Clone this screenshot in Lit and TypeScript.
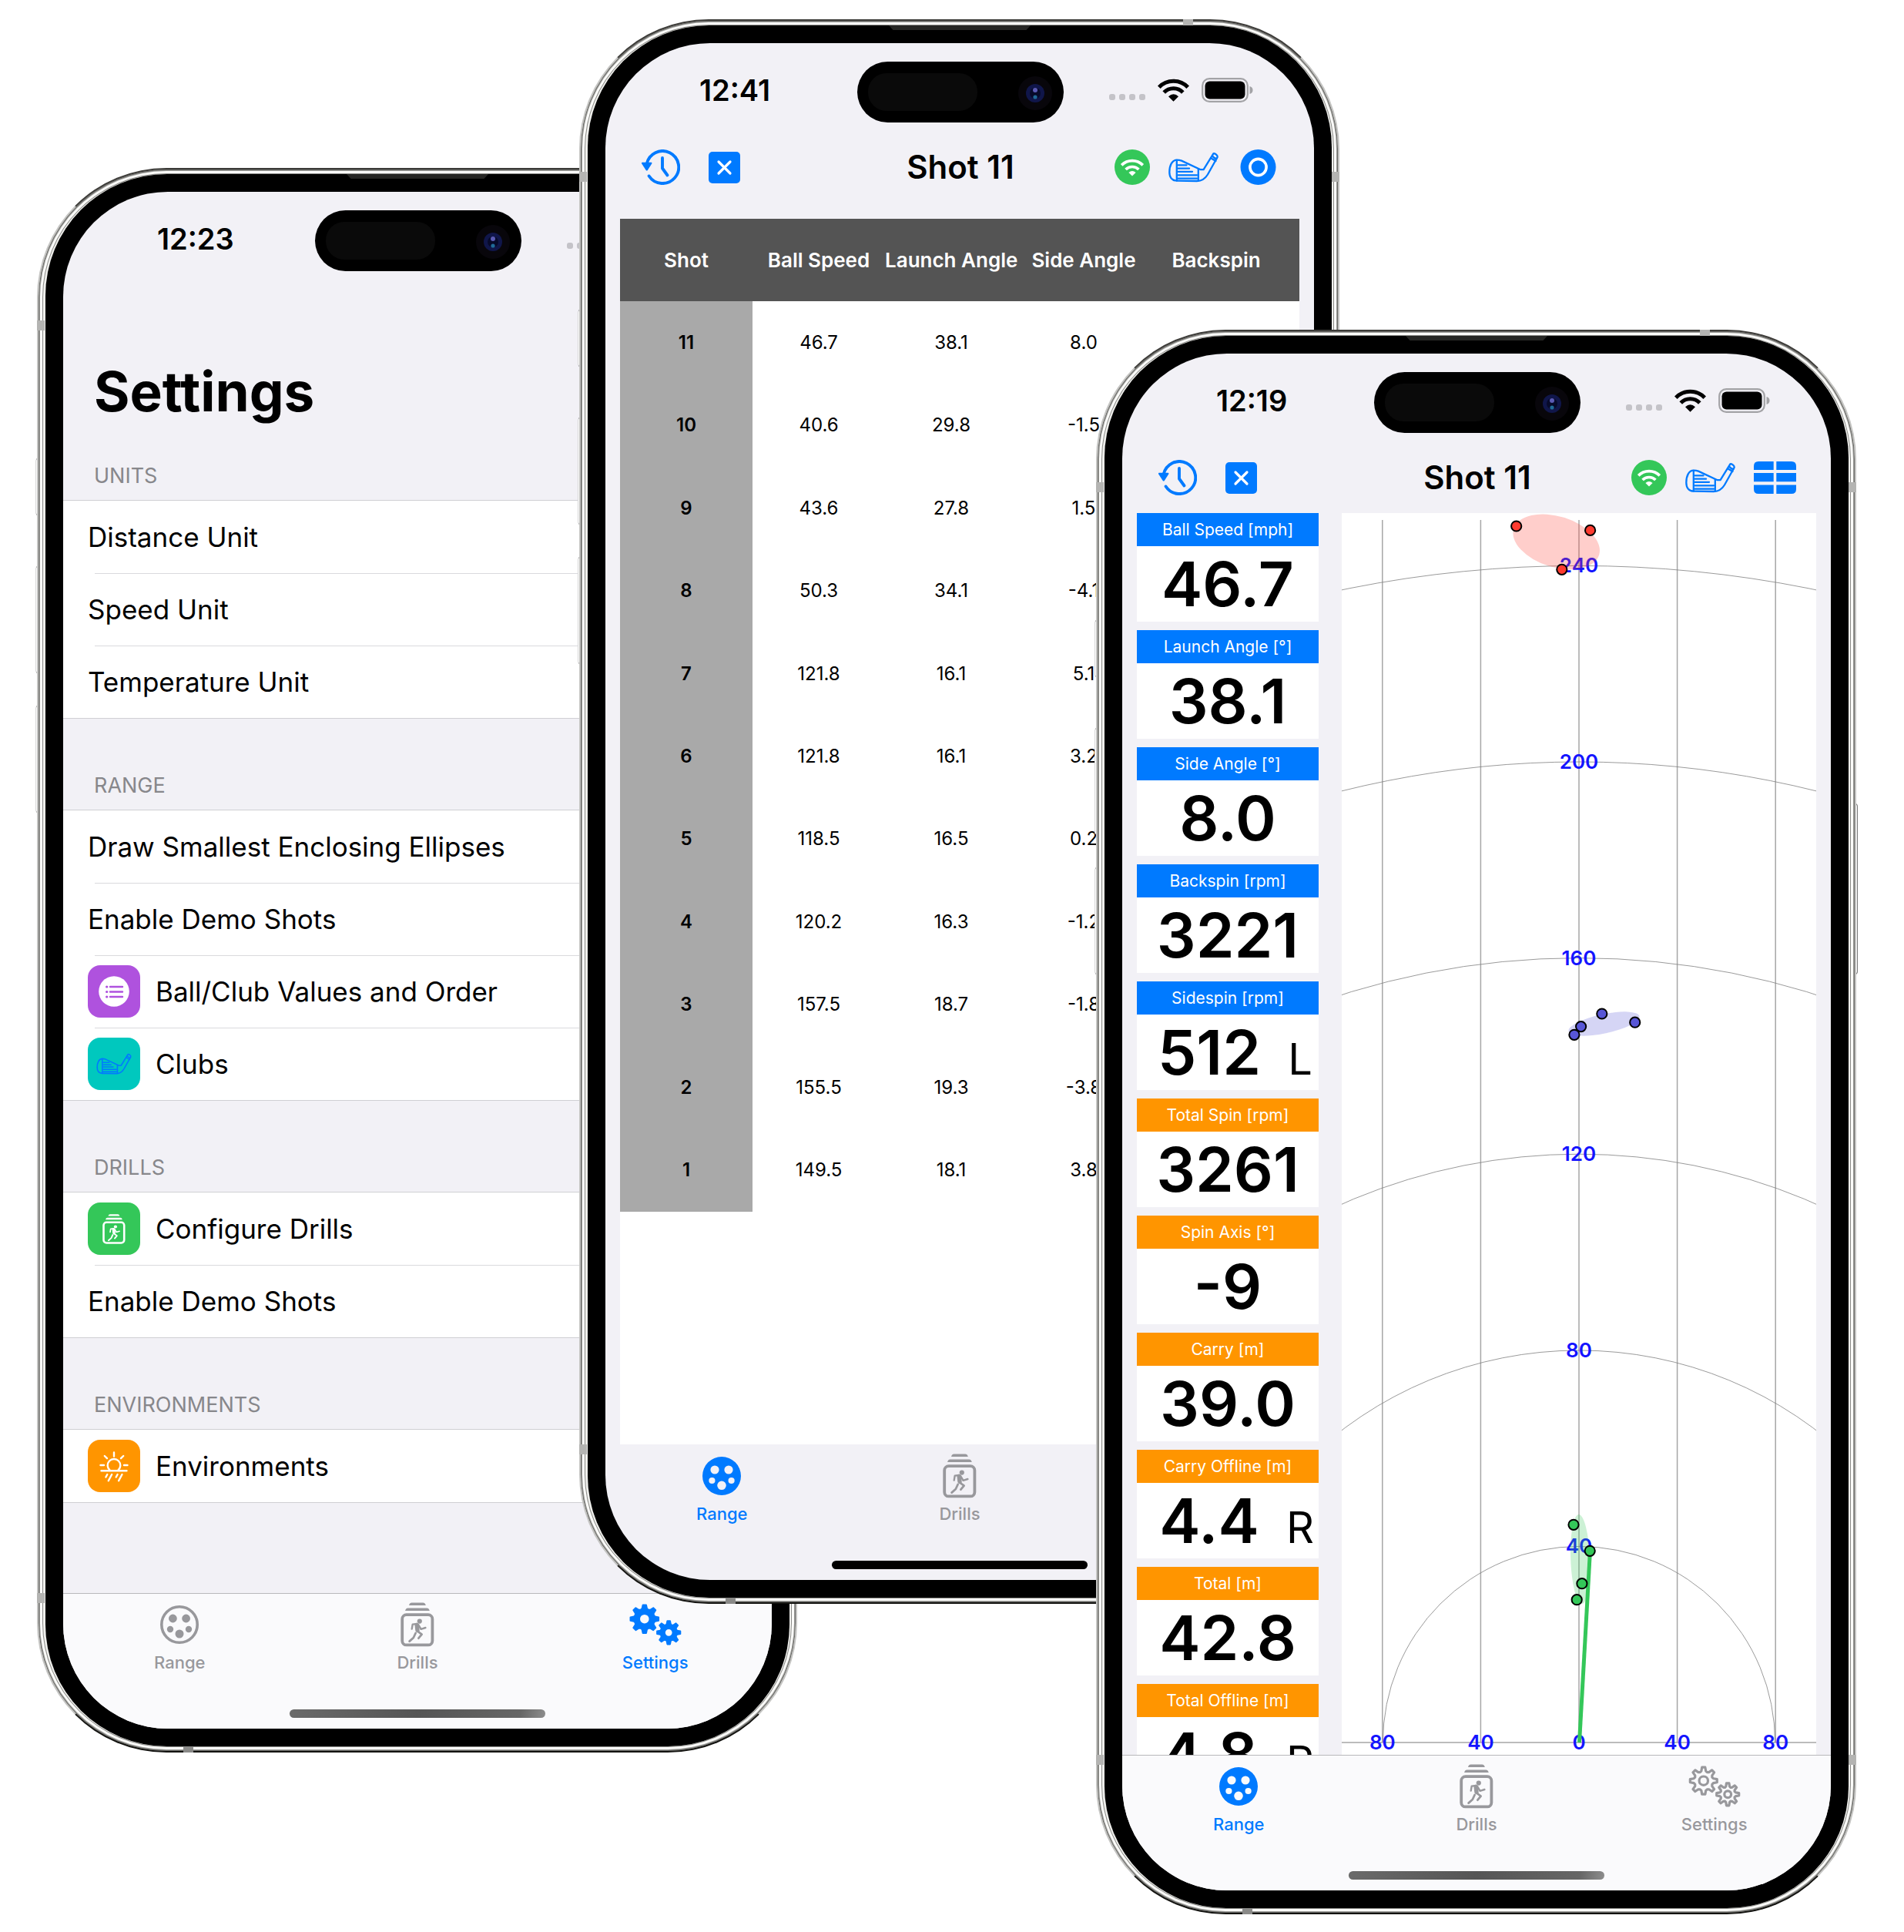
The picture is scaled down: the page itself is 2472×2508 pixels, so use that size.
import { LitElement, html, svg, css, nothing, type TemplateResult } from "lit";
import { customElement, property } from "lit/decorators.js";
import { classMap } from "lit/directives/class-map.js";

/* ---------- icons ---------- */

const gearPath = (cx: number, cy: number, outer: number, root: number): string => {
  const teeth = 8;
  const step = (Math.PI * 2) / teeth;
  const at = (r: number, a: number) =>
    `${(cx + r * Math.sin(a)).toFixed(2)} ${(cy - r * Math.cos(a)).toFixed(2)}`;
  let d = "";
  for (let i = 0; i < teeth; i++) {
    const a = i * step;
    d += `${i ? "L" : "M"}${at(root, a - step * 0.29)}L${at(outer, a - step * 0.15)}`;
    d += `L${at(outer, a + step * 0.15)}L${at(root, a + step * 0.29)}`;
    d += `L${at(root - 1, a + step * 0.5)}`;
  }
  return d + "Z";
};

const hole = (cx: number, cy: number, r: number): string =>
  `M${cx - r} ${cy}a${r} ${r} 0 1 0 ${r * 2} 0a${r} ${r} 0 1 0 ${-r * 2} 0Z`;

const rangeIcon = (filled: boolean) => html`<svg class="glyph" viewBox="0 0 50 60" width="50" height="60" aria-hidden="true">
  ${filled
    ? svg`<path fill="currentColor" fill-rule="evenodd" d="${hole(25, 30, 25)}${hole(16, 22, 5.6)}${hole(34, 22, 5.6)}${hole(12.4, 36, 4.1)}${hole(37.6, 36, 4.1)}${hole(25, 42.3, 5.8)}"/>`
    : svg`<circle cx="25" cy="30" r="23.2" fill="none" stroke="currentColor" stroke-width="3.6"/>
        <path fill="currentColor" d="${hole(16.4, 22, 5.4)}${hole(33.6, 22, 5.4)}${hole(13, 36, 4.2)}${hole(37, 36, 4.2)}${hole(25, 42, 5.5)}"/>`}
</svg>`;

const drillsIcon = (w = 44, h = 60) => html`<svg class="glyph" viewBox="0 0 44 60" width=${w} height=${h} aria-hidden="true">
  <g fill="none" stroke="currentColor" stroke-linecap="round" stroke-linejoin="round">
    <rect x="2.2" y="17.2" width="39.2" height="39.2" rx="5.5" stroke-width="3.8"/>
    <path d="M21.2 30.5l.8 7" stroke-width="5.400"/>
    <path d="M21.5 29l-5.8.6-1 6M23 30l3.6 5.8 5.8-1.8" stroke-width="2.4"/>
    <path d="M22 38.5l5.6 4.2-4.2 5M19.6 41l-2.8 6-5.2 4.6" stroke-width="2.8"/>
  </g>
  <g fill="currentColor">
    <circle cx="24.8" cy="25.6" r="3.1"/>
    <path d="M11 5c.8-2.4 1.8-3.4 3.6-3.4h14.6c1.800 0 2.800 1 3.600 3.400z"/>
    <path d="M6 12c.8-2.600 1.800-3.600 3.600-3.600h24.600c1.800 0 2.800 1 3.600 3.600z"/>
  </g>
</svg>`;

const gearsIcon = (filled: boolean) => html`<svg class="glyph" viewBox="0 0 68 60" width="68" height="60" aria-hidden="true">
  ${filled
    ? svg`<path fill="currentColor" fill-rule="evenodd" stroke="currentColor" stroke-width="2" stroke-linejoin="round"
        d="${gearPath(19.8, 22.7, 18.4, 14)}${hole(19.8, 22.7, 6.8)}${gearPath(51.2, 40.3, 15.2, 11.4)}${hole(51.2, 40.3, 5.4)}"/>`
    : svg`<g fill="none" stroke="currentColor" stroke-width="3.2" stroke-linejoin="round">
        <path d="${gearPath(19.8, 22.7, 17.6, 13)}"/><circle cx="19.800" cy="22.700" r="5.7"/>
        <path d="${gearPath(51.2, 40.3, 14.6, 10.6)}"/><circle cx="51.200" cy="40.300" r="4.400"/></g>`}
</svg>`;

const clubIcon = (w = 65, h = 40) => html`<svg class="glyph" viewBox="0 0 65 40" width=${w} height=${h} aria-hidden="true">
  <g fill="none" stroke="currentColor" stroke-width="2.300" stroke-linejoin="round" stroke-linecap="round">
    <path d="M11 10.600C4.500 10.600 1.300 18 1.300 26.500 1.300 33.500 5 37.500 11 37.700L37 38C44.500 38 48 34.500 51 29.500L63.600 7C64.200 4.800 60.500 1.600 58.400 2.400L45.600 23.200H41.800L17 11.600C15 10.800 13 10.600 11 10.600Z"/>
    <path d="M10.800 10.800V37.600M38.800 22.500V37.800M55.400 8.400L61.500 12M57 5.500Q60 9 62.500 9"/>
    <path d="M12.500 17.400H23.500M12.500 21.700H27M12.500 25.800H31M12.500 30.300H37M12.500 34.700H37"/>
  </g>
</svg>`;

const historyIcon = html`<svg class="glyph" viewBox="0 0 50 46" width="50" height="46" aria-hidden="true">
  <g fill="none" stroke="currentColor" stroke-width="3.9" stroke-linecap="round" stroke-linejoin="round">
    <path d="M6.600 19A21 21 0 1 1 9.600 34.500"/>
    <path d="M27 11V24.500L33.500 33.500"/>
  </g>
  <path fill="currentColor" d="M.8 16.800H12.700Q13.800 17.200 13.200 18.500L7.800 27Q6.700 28 5.700 27L.2 18.500Q-.4 17.200.8 16.800Z"/>
</svg>`;

const closeIcon = html`<svg class="glyph" viewBox="0 0 41 41" width="41" height="41" aria-hidden="true">
  <rect width="41" height="41" rx="5" fill="currentColor"/>
  <path d="M13 13L28 28M28 13L13 28" stroke="#fff" stroke-width="3.200" stroke-linecap="round"/>
</svg>`;

const linkIcon = html`<svg class="glyph" viewBox="0 0 46 46" width="46" height="46" aria-hidden="true">
  <circle cx="23" cy="23" r="23" fill="currentColor"/>
  <g fill="none" stroke="#fff" stroke-width="3.700">
    <path d="M9.200 20.400A19.500 19.500 0 0 1 36.800 20.400"/>
    <path d="M14.600 26A11.800 11.800 0 0 1 31.400 26"/>
  </g>
  <path fill="#fff" d="M18.400 30Q23 26 27.600 30L23 34.600Z"/>
</svg>`;

const ringIcon = html`<svg class="glyph" viewBox="0 0 55 46" width="55" height="46" aria-hidden="true">
  <circle cx="27.500" cy="23" r="23" fill="currentColor"/>
  <circle cx="27.500" cy="23" r="10.600" fill="none" stroke="#fff" stroke-width="3.600"/>
</svg>`;

const gridIcon = html`<svg class="glyph" viewBox="0 0 55 42" width="55" height="42" aria-hidden="true">
  <path fill="currentColor" d="M6 0H25.700V11H0V6Q0 0 6 0ZM29.300 0H49Q55 0 55 6V11H29.300ZM0 15H25.700V26.300H0ZM29.300 15H55V26.300H29.300ZM0 30.500H25.700V42H6Q0 42 0 36ZM29.300 30.500H55V36Q55 42 49 42H29.300Z"/>
</svg>`;

const listIcon = html`<svg class="glyph" viewBox="0 0 68 68" width="68" height="68" aria-hidden="true">
  <circle cx="34" cy="34" r="19.800" fill="#fff"/>
  <g stroke="#af52de" stroke-width="2.400" stroke-linecap="round">
    <path d="M29 28H45M29 34.500H45M29 41H45"/>
    <path d="M24.600 28h.2M24.600 34.500h.2M24.600 41h.2" stroke-width="3.200"/>
  </g>
</svg>`;

const sunIcon = html`<svg class="glyph" viewBox="0 0 68 68" width="68" height="68" aria-hidden="true">
  <g fill="none" stroke="#fff" stroke-width="2.400" stroke-linecap="round">
    <path d="M28.500 39.500A8.300 8.300 0 1 1 39.500 39.500"/>
    <path d="M34 16.500V21.500M16.500 33H21M47 33H51.500M21.800 21L25 24.200M46.200 21L43 24.200M17.500 40.300H50.500"/>
    <path d="M25.300 45L23.400 48.500M31.200 45L26.800 53.300M38.600 45L36.700 48.500M44.500 45L40.100 53.300"/>
  </g>
</svg>`;

/* ---------- phone shell ---------- */

type Tab = "range" | "drills" | "settings";

@customElement("phone-shell")
export class PhoneShell extends LitElement {
  @property() clock = "";
  @property() tab: Tab = "range";
  @property({ type: Boolean }) flat = false;

  static styles = css`
    :host { display: block; position: relative; min-width: 0; aspect-ratio: 987 / 2057; font-family: Inter, "Noto Sans", sans-serif; }
    .key, .band, .island, .speaker { position: absolute; }
    .key { left: -2px; width: 8px; box-sizing: border-box; border: 1px solid; border-color: #444 #d8d8d8; border-radius: 4px; background: #fff; }
    .mute { top: 377px; height: 74px; }
    .up { top: 517px; height: 139px; }
    .down { top: 698px; height: 139px; }
    .power { left: auto; right: -2px; top: 615px; height: 222px; border-color: #444 #777; }
    .rim {
      position: relative; box-sizing: border-box; height: 100%; padding: 6px 8px 6px 9px; border-radius: 168px;
      border: 2px solid; border-color: #3c3b38 #c4c4c2 #131310 #c4c4c2;
      background: #efefec;
      box-shadow: inset 0 0 0 1px #6b6b68, inset 0 0 0 2px #9b9b98, inset 0 0 0 5px #fbfbf9, inset 0 0 0 6px #8b8b88;
    }
    .band { width: 10px; height: 13px; background: #b4b4b2; }
    .band.l { left: -2px; } .band.r { right: -2px; }
    .band.hi { top: 196px; } .band.lo { bottom: 192px; }
    .band.t { top: -2px; right: 188px; width: 13px; height: 8px; }
    .band.b { bottom: -2px; left: 188px; width: 13px; height: 8px; background: #8a8a88; }
    .bezel { position: relative; box-sizing: border-box; height: 100%; padding: 23px; border-radius: 158px; background: #000; }
    .speaker { top: 0; left: 50%; width: 184px; height: 6px; margin-left: -92px; background: #262624; clip-path: polygon(0 0, 100% 0, 97% 100%, 3% 100%); }
    .screen { position: relative; display: flex; flex-direction: column; box-sizing: border-box; height: 100%; overflow: hidden; border-radius: 136px; background: #f2f1f6; }
    .status { display: flex; align-items: center; flex: none; height: 121px; padding: 0 79px 0 122px; gap: 16px; color: #000; }
    time { margin-right: auto; font-size: 38px; font-weight: 600; line-height: 44px; }
    .dots { display: flex; gap: 5px; margin-top: 19px; }
    .dots i { width: 8px; height: 8px; border-radius: 3px; background: #c4c3c8; }
    .island { top: 24px; left: 50%; width: 268px; height: 79px; margin-left: -133px; border-radius: 40px; background: #000; }
    .island svg { display: block; }
    main { display: flex; flex-direction: column; flex: 1; min-height: 0; overflow: hidden; }
    .tabs { display: flex; flex-direction: column; flex: none; box-sizing: border-box; height: 176px; border-top: 1px solid #b8b8bb; background: #fafafc; }
    .tabs.flat { border-color: transparent; background: transparent; }
    nav { display: grid; grid-template-columns: repeat(3, 1fr); margin: 0 -3px; padding-top: 10px; }
    button { display: flex; flex-direction: column; align-items: center; gap: 6px; padding: 0; border: 0; background: none; color: #98989c; font-family: inherit; font-size: 22px; font-weight: 500; line-height: 26px; }
    button.on { color: #007aff; }
    .home { width: 36%; height: 11px; margin: auto auto 14px; border-radius: 6px; background: linear-gradient(100deg, #6a6a6a, #555 50%, #666 90%, #8d8d8d); }
    .flat .home { background: #000; }
  `;

  private item(id: Tab, label: string, icon: TemplateResult) {
    return html`<button type="button" class=${classMap({ on: this.tab === id })}>${icon}<span>${label}</span></button>`;
  }

  render() {
    return html`
      <i class="key mute"></i><i class="key up"></i><i class="key down"></i><i class="key power"></i>
      <div class="rim">
        <i class="band l hi"></i><i class="band r hi"></i><i class="band l lo"></i><i class="band r lo"></i>
        <i class="band t"></i><i class="band b"></i>
        <div class="bezel">
          <i class="speaker"></i>
          <div class="screen">
            <div class="status">
              <time>${this.clock}</time>
              <span class="dots"><i></i><i></i><i></i><i></i></span>
              <svg viewBox="0 0 41 30" width="41" height="30" aria-hidden="true">
                <g fill="none" stroke="#000" stroke-width="5">
                  <path d="M1.800 11.200A26 26 0 0 1 39.200 11.200"/><path d="M8.200 18A17 17 0 0 1 32.800 18"/>
                </g>
                <path d="M14 23.200Q20.500 17.500 27 23.200L20.500 29.700Z"/>
              </svg>
              <svg viewBox="0 0 67 32" width="67" height="32" aria-hidden="true">
                <rect x="1.200" y="1.200" width="58.600" height="29.600" rx="9" fill="none" stroke="#a3a3a6" stroke-width="2.200"/>
                <rect x="4.500" y="4.500" width="52" height="23" rx="6" fill="#000"/>
                <path d="M62.500 11Q66.500 12 66.500 16 66.500 20 62.500 21Z" fill="#a3a3a6"/>
              </svg>
            </div>
            <div class="island">
              <svg viewBox="0 0 268 79" width="268" height="79" aria-hidden="true">
                <rect x="14" y="15" width="142" height="49" rx="24" fill="#0a0a0a"/>
                <circle cx="231" cy="41" r="22" fill="#08060b"/>
                <circle cx="231" cy="41" r="12" fill="#10164a"/>
                <circle cx="231" cy="41" r="7" fill="#070a2a"/>
                <circle cx="231" cy="37" r="3" fill="#5b5bb4"/>
                <circle cx="231" cy="46" r="2.600" fill="#1f6a98"/>
              </svg>
            </div>
            <main><slot></slot></main>
            <div class=${classMap({ tabs: true, flat: this.flat })}>
              <nav>
                ${this.item("range", "Range", rangeIcon(this.tab === "range"))}
                ${this.item("drills", "Drills", drillsIcon())}
                ${this.item("settings", "Settings", gearsIcon(this.tab === "settings"))}
              </nav>
              <div class="home"></div>
            </div>
          </div>
        </div>
      </div>`;
  }
}

/* ---------- toolbar ---------- */

@customElement("shot-toolbar")
export class ShotToolbar extends LitElement {
  @property() view: "table" | "plot" = "table";

  static styles = css`
    :host { display: grid; grid-template-columns: 1fr auto 1fr; align-items: center; flex: none; height: 80px; padding: 0 45px 0 47px; }
    h2 { margin: 0; font-size: 42px; font-weight: 600; line-height: 48px; }
    div { display: flex; align-items: center; gap: 37px; }
    .right { justify-content: flex-end; gap: 24px; }
    button { display: block; padding: 0; border: 0; background: none; color: #007aff; }
    .link { color: #34c759; }
    svg { display: block; }
  `;

  render() {
    return html`
      <div>
        <button type="button" aria-label="History">${historyIcon}</button>
        <button type="button" aria-label="Clear">${closeIcon}</button>
      </div>
      <h2>Shot 11</h2>
      <div class="right">
        <button type="button" class="link" aria-label="Connection">${linkIcon}</button>
        <button type="button" aria-label="Club">${clubIcon()}</button>
        <button type="button" aria-label="Switch view">${this.view === "table" ? ringIcon : gridIcon}</button>
      </div>`;
  }
}

/* ---------- settings ---------- */

interface Row { label: string; tile?: string; icon?: TemplateResult; }
interface Section { title: string; rows: Row[]; }

const SECTIONS: Section[] = [
  { title: "UNITS", rows: [{ label: "Distance Unit" }, { label: "Speed Unit" }, { label: "Temperature Unit" }] },
  {
    title: "RANGE",
    rows: [
      { label: "Draw Smallest Enclosing Ellipses" },
      { label: "Enable Demo Shots" },
      { label: "Ball/Club Values and Order", tile: "purple", icon: listIcon },
      { label: "Clubs", tile: "teal", icon: clubIcon(46, 28) },
    ],
  },
  { title: "DRILLS", rows: [{ label: "Configure Drills", tile: "green", icon: drillsIcon(30, 41) }, { label: "Enable Demo Shots" }] },
  { title: "ENVIRONMENTS", rows: [{ label: "Environments", tile: "orange", icon: sunIcon }] },
];

@customElement("settings-list")
export class SettingsList extends LitElement {
  static styles = css`
    :host { display: block; }
    h1 { margin: 106px 0 0 40px; font-size: 71px; font-weight: 700; line-height: 64px; }
    h2 { display: flex; align-items: flex-end; box-sizing: border-box; height: 119px; margin: 0; padding: 0 40px 15px; color: #87878b; font-size: 27px; font-weight: 400; line-height: 32px; }
    h1 + section h2 { height: 109px; }
    ul { margin: 0; padding: 0; list-style: none; background: #fff; border-top: 1px solid #cfcfd3; border-bottom: 1px solid #cfcfd3; margin-bottom: -1px; }
    li { position: relative; display: flex; align-items: center; gap: 20px; height: 94px; padding-left: 32px; font-size: 35px; line-height: 44px; }
    li + li::before { content: ""; position: absolute; top: 0; left: 41px; right: 0; height: 1px; background: #dadadd; }
    .tile { display: grid; place-items: center; width: 68px; height: 68px; border-radius: 16px; }
    .tile svg { display: block; }
    .purple { background: #af52de; }
    .teal { background: #00c8be; color: #007aff; }
    .green { background: #34c759; color: #fff; }
    .orange { background: #ff9500; }
  `;

  render() {
    return html`
      <h1>Settings</h1>
      ${SECTIONS.map((s) => html`<section>
        <h2>${s.title}</h2>
        <ul>${s.rows.map((r) => html`<li>${r.icon ? html`<span class="tile ${r.tile}">${r.icon}</span>` : nothing}<span>${r.label}</span></li>`)}</ul>
      </section>`)}`;
  }
}

/* ---------- shot table ---------- */

const SHOTS: [string, string, string, string][] = [
  ["11", "46.7", "38.1", "8.0"],
  ["10", "40.6", "29.8", "-1.5"],
  ["9", "43.6", "27.8", "1.5"],
  ["8", "50.3", "34.1", "-4.1"],
  ["7", "121.8", "16.1", "5.1"],
  ["6", "121.8", "16.1", "3.2"],
  ["5", "118.5", "16.5", "0.2"],
  ["4", "120.2", "16.3", "-1.2"],
  ["3", "157.5", "18.7", "-1.8"],
  ["2", "155.5", "19.3", "-3.8"],
  ["1", "149.5", "18.1", "3.8"],
];

@customElement("shot-table")
export class ShotTable extends LitElement {
  static styles = css`
    :host { display: block; flex: 1; min-height: 0; margin: 27px 19px 0; background: #fff; }
    table { width: 100%; height: 1289px; table-layout: fixed; border-collapse: collapse; font-size: 24px; line-height: 30px; text-align: center; }
    th, td { height: 107px; padding: 0; font-weight: 400; white-space: nowrap; }
    .value { width: 172px; }
    thead th { background: #545454; color: #fff; font-size: 26px; font-weight: 600; }
    tbody th { background: #a9a9a9; color: #000; font-weight: 600; }
  `;

  render() {
    return html`<table>
      <thead><tr>
        <th class="value" scope="col">Shot</th><th class="value" scope="col">Ball Speed</th>
        <th class="value" scope="col">Launch Angle</th><th class="value" scope="col">Side Angle</th>
        <th class="value" scope="col">Backspin</th><th></th>
      </tr></thead>
      <tbody>${SHOTS.map(([n, ...v]) => html`<tr><th scope="row">${n}</th>${v.map((x) => html`<td>${x}</td>`)}<td></td><td></td></tr>`)}</tbody>
    </table>`;
  }
}

/* ---------- metrics and dispersion plot ---------- */

interface Metric { name: string; value: string; side?: string; derived?: boolean; }

const METRICS: Metric[] = [
  { name: "Ball Speed [mph]", value: "46.7" },
  { name: "Launch Angle [°]", value: "38.1" },
  { name: "Side Angle [°]", value: "8.0" },
  { name: "Backspin [rpm]", value: "3221" },
  { name: "Sidespin [rpm]", value: "512", side: "L" },
  { name: "Total Spin [rpm]", value: "3261", derived: true },
  { name: "Spin Axis [°]", value: "-9", derived: true },
  { name: "Carry [m]", value: "39.0", derived: true },
  { name: "Carry Offline [m]", value: "4.4", side: "R", derived: true },
  { name: "Total [m]", value: "42.8", derived: true },
  { name: "Total Offline [m]", value: "4.8", side: "R", derived: true },
];

const X0 = 308;
const Y0 = 1596;
const ARC = 254.6;
const LANE = 127.6;

interface Group { color: string; ellipse: [number, number, number, number, number]; points: [number, number][]; }

const GROUPS: Group[] = [
  { color: "#ff3b30", ellipse: [278.7, 37.3, 58, 33, 17], points: [[226.7, 17], [322.6, 22.4], [285.8, 73.3]] },
  { color: "#5856d6", ellipse: [340.5, 663, 47, 12.5, -12], points: [[337.8, 650], [380.7, 661.2], [310.6, 666.6], [301.9, 677.3]] },
  { color: "#34c759", ellipse: [309.7, 1358, 12.5, 58, -2], points: [[301, 1313.3], [322.2, 1347.3], [311.9, 1389.7], [305.2, 1410.7]] },
];

@customElement("shot-range")
export class ShotRange extends LitElement {
  static styles = css`
    :host { display: flex; flex: 1; min-height: 0; gap: 30px; margin: 6px 19px 0; }
    dl { display: flex; flex-direction: column; flex: none; gap: 11px; width: 236px; margin: 0; }
    .metric { flex: none; background: #fff; }
    dt { background: #007aff; color: #fff; font-size: 21px; line-height: 43px; text-align: center; }
    .derived dt { background: #ff9500; }
    dd { display: grid; grid-template-columns: 1fr; align-items: baseline; height: 98px; margin: 0; text-align: center; font-size: 80px; font-weight: 600; line-height: 98px; }
    dd.sided { grid-template-columns: 1fr 48px; }
    .side { font-size: 56px; font-weight: 400; line-height: 60px; }
    .plot { flex: 1; min-width: 0; background: #fff; overflow: hidden; }
    .plot svg { display: block; width: 100%; }
    text { fill: #1414ff; font-size: 26px; font-weight: 600; text-anchor: middle; }
    .grid { stroke: #a6a6a6; stroke-width: 1.5; }
    .arc { fill: none; stroke: #808080; stroke-width: 0.8; }
  `;

  render() {
    const lanes = [-2, -1, 0, 1, 2];
    const rings = [1, 2, 3, 4, 5, 6];
    return html`
      <dl>${METRICS.map((m) => html`<div class=${classMap({ metric: true, derived: !!m.derived })}>
        <dt>${m.name}</dt>
        <dd class=${classMap({ sided: !!m.side })}><span>${m.value}</span>${m.side ? html`<span class="side">${m.side}</span>` : nothing}</dd>
      </div>`)}</dl>
      <div class="plot">
        <svg viewBox="0 0 616 1612" role="img" aria-label="Dispersion">
          ${lanes.map((l) => svg`<path class="grid" d="M${X0 + l * LANE} 9V${Y0}"/>`)}
          <path class="grid" d="M0 ${Y0}H616"/>
          ${rings.map((r) => svg`<path class="arc" d="M${X0 - r * ARC} ${Y0}A${r * ARC} ${r * ARC} 0 0 1 ${X0 + r * ARC} ${Y0}"/>`)}
          ${rings.map((r) => svg`<text x=${X0} y=${Y0 - r * ARC + 9}>${r * 40}</text>`)}
          ${lanes.map((l) => svg`<text x=${X0 + l * LANE} y=${Y0 + 9}>${Math.abs(l * 40)}</text>`)}
          ${GROUPS.map((g) => svg`<ellipse cx=${g.ellipse[0]} cy=${g.ellipse[1]} rx=${g.ellipse[2]} ry=${g.ellipse[3]}
              transform="rotate(${g.ellipse[4]} ${g.ellipse[0]} ${g.ellipse[1]})" fill=${g.color} fill-opacity="0.25"/>`)}
          <path d="M322.2 1352L308.5 ${Y0}" stroke="#34c759" stroke-width="5"/>
          ${GROUPS.map((g) => g.points.map(([x, y]) => svg`<circle cx=${x} cy=${y} r="6.6" fill=${g.color} stroke="#000" stroke-width="2"/>`))}
        </svg>
      </div>`;
  }
}

/* ---------- page ---------- */

@customElement("app-root")
export class AppRoot extends LitElement {
  static styles = css`
    :host { display: block; background: #fff; }
    .stage { display: grid; align-items: start; grid-template-columns: 48fr 704fr 283fr 388fr 316fr 671fr 62fr; padding-bottom: 23px; overflow: hidden; }
    phone-shell { grid-row: 1; }
    .first { grid-column: 2 / 4; margin-top: 218px; }
    .second { grid-column: 3 / 6; margin-top: 25px; }
    .third { grid-column: 5 / 7; margin-top: 428px; }
  `;

  render() {
    return html`<div class="stage">
      <phone-shell class="first" clock="12:23" tab="settings"><settings-list></settings-list></phone-shell>
      <phone-shell class="second" clock="12:41" tab="range" flat><shot-toolbar view="table"></shot-toolbar><shot-table></shot-table></phone-shell>
      <phone-shell class="third" clock="12:19" tab="range"><shot-toolbar view="plot"></shot-toolbar><shot-range></shot-range></phone-shell>
    </div>`;
  }
}
